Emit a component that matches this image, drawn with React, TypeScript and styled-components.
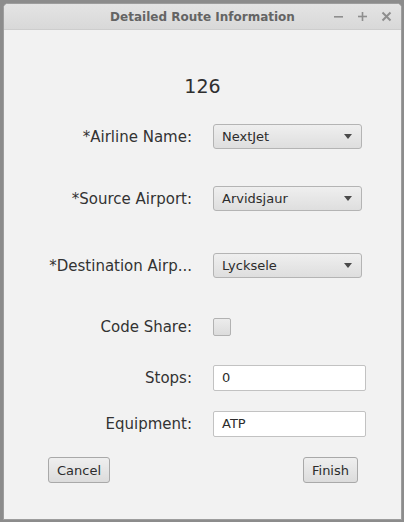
import React, {FC} from 'react'
import styled, {createGlobalStyle} from "styled-components";

const GlobalStyle = createGlobalStyle`
  html, body {
    margin: 0;
    padding: 0;
    background: #8c8c8c;
    width: 404px;
    height: 522px;
    overflow: hidden;
  }
`;

const Root = styled.div`
  width: 404px;
  height: 522px;
  padding: 3px 3px 2px 3px;
  box-sizing: border-box;
`;

const Window = styled.div`
  display: flex;
  flex-direction: column;
  width: 399px;
  height: 517px;
  box-sizing: border-box;
  border: 1px solid #9d9d9d;
  border-radius: 5px 5px 0 0;
  background: #f2f2f2;
  overflow: hidden;
  font-family: "DejaVu Sans", sans-serif;
  color: #333;
`;

const TitleBar = styled.div`
  position: relative;
  display: flex;
  align-items: center;
  justify-content: center;
  height: 25px;
  flex-shrink: 0;
  background: linear-gradient(180deg, #e4e4e4 0%, #d8d8d8 100%);
  border-bottom: 1px solid #cdcdcd;
`;

const TitleText = styled.span`
  font-family: "DejaVu Sans", sans-serif;
  font-weight: 700;
  font-size: 12px;
  color: #646464;
`;

const Controls = styled.div`
  position: absolute;
  right: 9px;
  top: 0;
  height: 25px;
  display: flex;
  align-items: center;
  gap: 12px;
`;

const Ctrl = styled.span`
  display: flex;
  width: 12px;
  justify-content: center;
`;

const Content = styled.div`
  display: flex;
  flex-direction: column;
`;

const Heading = styled.div`
  margin-top: 44px;
  text-align: center;
  font-size: 19px;
  line-height: 24px;
  color: #2f2f2f;
`;

type RowProps = {
    $gap: number
}

const Row = styled.div<RowProps>`
  display: flex;
  align-items: center;
  height: 25px;
  margin-top: ${({$gap}) => $gap}px;
`;

const Label = styled.label`
  width: 188px;
  text-align: right;
  font-size: 15px;
  color: #333;
  white-space: nowrap;
  margin-right: 21px;
`;

const Combo = styled.div`
  display: flex;
  align-items: center;
  justify-content: space-between;
  width: 149px;
  height: 25px;
  box-sizing: border-box;
  padding: 0 9px 0 8px;
  border: 1px solid #b4b4b4;
  border-radius: 3px;
  background: linear-gradient(180deg, #efefef 0%, #dedede 100%);
  font-size: 13px;
  color: #2c2c2c;
`;

const Arrow = styled.span`
  width: 0;
  height: 0;
  border-left: 4px solid transparent;
  border-right: 4px solid transparent;
  border-top: 5px solid #4a4a4a;
`;

const Field = styled.div`
  display: flex;
  align-items: center;
  width: 153px;
  height: 26px;
  box-sizing: border-box;
  padding: 0 8px;
  border: 1px solid #c2c2c2;
  border-radius: 2px;
  background: #fff;
  font-size: 13px;
  color: #2c2c2c;
`;

const Check = styled.div`
  width: 18px;
  height: 18px;
  box-sizing: border-box;
  border: 1px solid #b2b2b2;
  border-radius: 2px;
  background: linear-gradient(180deg, #ececec 0%, #dcdcdc 100%);
`;

const ButtonBar = styled.div`
  display: flex;
  justify-content: space-between;
  margin-top: 21px;
  padding: 0 43px 0 44px;
`;

const Button = styled.button`
  height: 26px;
  padding: 0 8px;
  box-sizing: border-box;
  border: 1px solid #a9a9a9;
  border-radius: 3px;
  background: linear-gradient(180deg, #efefef 0%, #dcdcdc 100%);
  font-family: "DejaVu Sans", sans-serif;
  font-size: 13px;
  color: #2c2c2c;
`;

const combos = [
    {label: '*Airline Name:', value: 'NextJet', gap: 26},
    {label: '*Source Airport:', value: 'Arvidsjaur', gap: 37},
    {label: '*Destination Airp...', value: 'Lycksele', gap: 42},
]

const fields = [
    {label: 'Stops:', value: '0', gap: 26},
    {label: 'Equipment:', value: 'ATP', gap: 21},
]

const App: FC = () => {
    return (
        <Root>
            <GlobalStyle/>
            <Window>
                <TitleBar>
                    <TitleText>Detailed Route Information</TitleText>
                    <Controls>
                        <Ctrl>
                            <svg width="11" height="11" viewBox="0 0 11 11">
                                <rect x="1" y="5" width="9" height="1.6" fill="#8e8e8e"/>
                            </svg>
                        </Ctrl>
                        <Ctrl>
                            <svg width="11" height="11" viewBox="0 0 11 11">
                                <rect x="1" y="4.7" width="9" height="1.6" fill="#8e8e8e"/>
                                <rect x="4.7" y="1" width="1.6" height="9" fill="#8e8e8e"/>
                            </svg>
                        </Ctrl>
                        <Ctrl>
                            <svg width="11" height="11" viewBox="0 0 11 11">
                                <path d="M1.5 1.5 L9.5 9.5 M9.5 1.5 L1.5 9.5" stroke="#8e8e8e" strokeWidth="2"/>
                            </svg>
                        </Ctrl>
                    </Controls>
                </TitleBar>

                <Content>
                    <Heading>126</Heading>

                    {combos.map((item, index) => (
                        <Row $gap={item.gap} key={index}>
                            <Label>{item.label}</Label>
                            <Combo>
                                <span>{item.value}</span>
                                <Arrow/>
                            </Combo>
                        </Row>
                    ))}

                    <Row $gap={36}>
                        <Label>Code Share:</Label>
                        <Check/>
                    </Row>

                    {fields.map((item, index) => (
                        <Row $gap={item.gap} key={index}>
                            <Label>{item.label}</Label>
                            <Field>{item.value}</Field>
                        </Row>
                    ))}

                    <ButtonBar>
                        <Button>Cancel</Button>
                        <Button>Finish</Button>
                    </ButtonBar>
                </Content>
            </Window>
        </Root>
    )
}

export default App;
